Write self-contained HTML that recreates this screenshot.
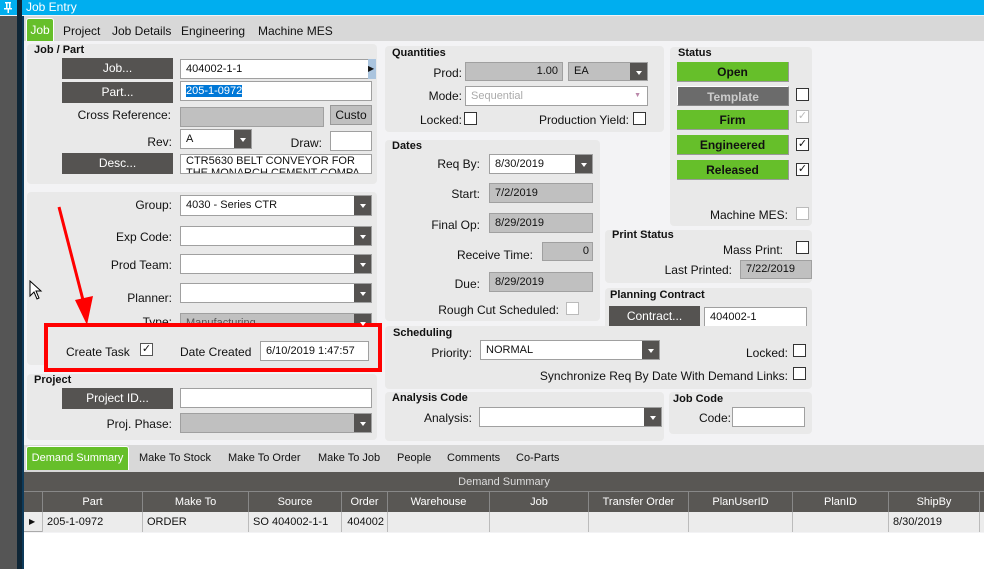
<!DOCTYPE html><html><head><style>
*{box-sizing:border-box;margin:0;padding:0}
body{width:984px;height:569px;overflow:hidden;background:#f3f3f5;font-family:"Liberation Sans",sans-serif;font-size:12px;color:#111;position:relative}
.a{position:absolute}
.pn{position:absolute;background:#e9e9e9;border-radius:4px}
.h{position:absolute;font-weight:bold;font-size:11px}
.l{position:absolute;text-align:right;font-size:12px;white-space:nowrap}
.b{position:absolute;background:#555351;color:#fff;text-align:center;font-size:12px;line-height:21px}
.i{position:absolute;background:#fff;border:1px solid #a0a0a0;font-size:11px;padding-left:5px;line-height:18px;white-space:nowrap;overflow:hidden}
.g{background:#c0c0c0}
.dd::after{content:"";position:absolute;right:0;top:0;bottom:0;width:17px;background:#555351}
.dd::before{content:"";position:absolute;right:5px;top:8px;border:3.5px solid transparent;border-top:4px solid #fff;z-index:2}
.cb{position:absolute;width:13px;height:13px;border:1px solid #333;background:#fff;font-size:11px;line-height:10px;text-align:center}
.st{position:absolute;left:677px;width:112px;height:20px;background:#66bf2a;font-weight:bold;text-align:center;line-height:20px;font-size:12px;border-right:1px solid #999;border-bottom:1px solid #999}
.n{font-family:"Liberation Sans Narrow","Liberation Sans",sans-serif;font-size:11px}
.col{position:absolute;top:492px;height:20px;line-height:20px;text-align:center;color:#fff;border-left:1px solid #888;background:#595754}
.cell{position:absolute;top:512px;height:20px;line-height:20px;border-left:1px solid #bbb;padding-left:4px;background:#ececec}
</style></head><body>
<div class="a" style="left:0;top:0;width:984px;height:15px;background:#00aeef"></div>
<div class="a" style="left:26px;top:0;color:#fff;font-size:12px;line-height:14px">Job Entry</div>
<div class="a" style="left:0;top:16px;width:17px;height:553px;background:#555"></div>
<div class="a" style="left:17px;top:0;width:5px;height:569px;background:#0f2636"></div>
<div class="a" style="left:22px;top:16px;width:2px;height:553px;background:#0d3a5a"></div>
<svg class="a" style="left:3px;top:2px" width="11" height="11"><rect x="2" y="0" width="6" height="1.5" fill="#fff"/><rect x="3" y="1" width="1.5" height="5" fill="#fff"/><rect x="6" y="1" width="1.5" height="5" fill="#fff"/><rect x="1" y="6" width="8" height="1.5" fill="#fff"/><rect x="4.5" y="7" width="1.5" height="4" fill="#fff"/></svg>
<div class="a" style="left:24px;top:16px;width:960px;height:25px;background:#d8d8d8"></div>
<div class="a" style="left:26px;top:18px;width:28px;height:23px;background:#66bf2a;border:1px solid #fff;border-bottom:none;border-radius:3px 3px 0 0;color:#fff;text-align:center;line-height:22px">Job</div>
<div class="a" style="left:63px;top:24px">Project</div>
<div class="a" style="left:112px;top:24px">Job Details</div>
<div class="a" style="left:181px;top:24px">Engineering</div>
<div class="a" style="left:258px;top:24px">Machine MES</div>

<div class="pn" style="left:27px;top:44px;width:350px;height:140px"></div>
<div class="h" style="left:34px;top:44px">Job / Part</div>
<div class="b" style="left:62px;top:58px;width:111px">Job...</div>
<div class="b" style="left:62px;top:82px;width:111px">Part...</div>
<div class="b" style="left:62px;top:153px;width:111px">Desc...</div>
<div class="i" style="left:180px;top:59px;width:189px;height:20px">404002-1-1</div>
<div class="a" style="left:368px;top:59px;width:8px;height:20px;background:#aac4de;font-size:8px;line-height:20px">▶</div>
<div class="i" style="left:180px;top:81px;width:192px;height:20px"><span style="background:#0078d7;color:#fff">205-1-0972</span></div>
<div class="l" style="left:70px;top:108px;width:101px">Cross Reference:</div>
<div class="i g" style="left:180px;top:107px;width:144px;height:20px"></div>
<div class="a" style="left:330px;top:105px;width:42px;height:20px;background:#c0c0c0;border:1px solid #999;text-align:center;line-height:18px">Custo</div>
<div class="l" style="left:100px;top:135px;width:72px">Rev:</div>
<div class="i dd" style="left:180px;top:129px;width:72px;height:20px">A</div>
<div class="l" style="left:280px;top:136px;width:42px">Draw:</div>
<div class="i" style="left:330px;top:131px;width:42px;height:20px"></div>
<div class="i" style="left:180px;top:154px;width:192px;height:20px;line-height:12px;font-size:11px">CTR5630 BELT CONVEYOR FOR<br>THE MONARCH CEMENT COMPA</div>

<div class="pn" style="left:27px;top:192px;width:350px;height:173px"></div>
<div class="l" style="left:80px;top:198px;width:92px">Group:</div>
<div class="i dd" style="left:180px;top:195px;width:192px;height:21px;line-height:19px">4030 - Series CTR</div>
<div class="l" style="left:80px;top:230px;width:92px">Exp Code:</div>
<div class="i dd" style="left:180px;top:226px;width:192px;height:20px"></div>
<div class="l" style="left:80px;top:258px;width:92px">Prod Team:</div>
<div class="i dd" style="left:180px;top:254px;width:192px;height:20px"></div>
<div class="l" style="left:80px;top:291px;width:92px">Planner:</div>
<div class="i dd" style="left:180px;top:283px;width:192px;height:20px"></div>
<div class="l" style="left:80px;top:315px;width:92px">Type:</div>
<div class="i g dd" style="left:180px;top:313px;width:192px;height:20px;color:#555">Manufacturing</div>
<div class="a" style="left:44px;top:323px;width:338px;height:49px;border:4px solid #f00;background:#e9e9e9"></div>
<div class="a" style="left:66px;top:345px">Create Task</div>
<div class="cb" style="left:140px;top:343px;border-color:#555">✓</div>
<div class="a" style="left:180px;top:345px">Date Created</div>
<div class="i" style="left:260px;top:341px;width:109px;height:20px;font-size:11px">6/10/2019 1:47:57</div>
<svg class="a" style="left:50px;top:200px" width="50" height="130"><line x1="9" y1="7" x2="33" y2="100" stroke="#f00" stroke-width="3"/><polygon points="25,100 43,96 37,125" fill="#f00"/></svg>
<svg class="a" style="left:29px;top:280px" width="14" height="22"><path d="M1 1 L1 16 L5 12 L8 19 L10 18 L7 11 L12 11 Z" fill="#fff" stroke="#000" stroke-width="1"/></svg>

<div class="pn" style="left:27px;top:374px;width:350px;height:66px"></div>
<div class="h" style="left:34px;top:374px">Project</div>
<div class="b" style="left:62px;top:388px;width:111px">Project ID...</div>
<div class="i" style="left:180px;top:388px;width:192px;height:20px"></div>
<div class="l" style="left:80px;top:417px;width:92px">Proj. Phase:</div>
<div class="i g dd" style="left:180px;top:413px;width:192px;height:20px"></div>

<div class="pn" style="left:385px;top:46px;width:279px;height:86px"></div>
<div class="h" style="left:392px;top:47px">Quantities</div>
<div class="l" style="left:400px;top:66px;width:62px">Prod:</div>
<div class="i g" style="left:465px;top:62px;width:98px;height:19px;text-align:right;padding-right:4px;line-height:17px">1.00</div>
<div class="i g dd" style="left:568px;top:62px;width:80px;height:19px;line-height:17px">EA</div>
<div class="l" style="left:400px;top:89px;width:62px">Mode:</div>
<div class="i" style="left:465px;top:86px;width:183px;height:20px;color:#aaa">Sequential<span style="position:absolute;right:6px;font-size:7px;color:#b8a">▼</span></div>
<div class="l" style="left:400px;top:113px;width:62px">Locked:</div>
<div class="cb" style="left:464px;top:112px"></div>
<div class="l" style="left:520px;top:113px;width:109px">Production Yield:</div>
<div class="cb" style="left:633px;top:112px"></div>

<div class="pn" style="left:385px;top:140px;width:215px;height:181px"></div>
<div class="h" style="left:392px;top:140px">Dates</div>
<div class="l" style="left:400px;top:157px;width:80px">Req By:</div>
<div class="i dd" style="left:489px;top:154px;width:104px;height:20px">8/30/2019</div>
<div class="l" style="left:400px;top:187px;width:80px">Start:</div>
<div class="i g" style="left:489px;top:183px;width:104px;height:20px">7/2/2019</div>
<div class="l" style="left:400px;top:218px;width:80px">Final Op:</div>
<div class="i g" style="left:489px;top:213px;width:104px;height:20px">8/29/2019</div>
<div class="l" style="left:400px;top:248px;width:133px">Receive Time:</div>
<div class="i g" style="left:542px;top:242px;width:51px;height:19px;text-align:right;padding-right:3px;line-height:17px">0</div>
<div class="l" style="left:400px;top:277px;width:80px">Due:</div>
<div class="i g" style="left:489px;top:272px;width:104px;height:20px">8/29/2019</div>
<div class="l" style="left:400px;top:303px;width:159px">Rough Cut Scheduled:</div>
<div class="cb" style="left:566px;top:302px;border-color:#bbb"></div>

<div class="pn" style="left:670px;top:47px;width:142px;height:179px"></div>
<div class="h" style="left:678px;top:47px">Status</div>
<div class="st" style="top:62px">Open</div>
<div class="st" style="top:86px;background:#6b6b6b;color:#ccc;border:1px solid #fff;border-right:1px solid #888;border-bottom:1px solid #888">Template</div>
<div class="st" style="top:110px">Firm</div>
<div class="st" style="top:135px">Engineered</div>
<div class="st" style="top:160px">Released</div>
<div class="cb" style="left:796px;top:88px"></div>
<div class="cb" style="left:796px;top:110px;border-color:#bbb;color:#bbb">✓</div>
<div class="cb" style="left:796px;top:138px">✓</div>
<div class="cb" style="left:796px;top:163px">✓</div>
<div class="l" style="left:690px;top:208px;width:98px">Machine MES:</div>
<div class="cb" style="left:796px;top:207px;border-color:#bbb"></div>

<div class="pn" style="left:605px;top:230px;width:207px;height:53px"></div>
<div class="h" style="left:612px;top:229px">Print Status</div>
<div class="l" style="left:690px;top:243px;width:93px">Mass Print:</div>
<div class="cb" style="left:796px;top:241px"></div>
<div class="l" style="left:640px;top:263px;width:92px">Last Printed:</div>
<div class="i g" style="left:740px;top:260px;width:72px;height:19px;line-height:17px">7/22/2019</div>

<div class="pn" style="left:605px;top:288px;width:207px;height:46px"></div>
<div class="h" style="left:610px;top:289px">Planning Contract</div>
<div class="b" style="left:609px;top:306px;width:91px">Contract...</div>
<div class="i" style="left:704px;top:307px;width:103px;height:21px;line-height:19px">404002-1</div>

<div class="pn" style="left:385px;top:326px;width:427px;height:63px"></div>
<div class="h" style="left:393px;top:327px">Scheduling</div>
<div class="l" style="left:400px;top:346px;width:72px">Priority:</div>
<div class="i dd" style="left:480px;top:340px;width:180px;height:20px">NORMAL</div>
<div class="l" style="left:700px;top:346px;width:88px">Locked:</div>
<div class="cb" style="left:793px;top:344px"></div>
<div class="l" style="left:520px;top:369px;width:268px">Synchronize Req By Date With Demand Links:</div>
<div class="cb" style="left:793px;top:367px"></div>

<div class="pn" style="left:385px;top:392px;width:279px;height:49px"></div>
<div class="h" style="left:392px;top:392px">Analysis Code</div>
<div class="l" style="left:400px;top:411px;width:72px">Analysis:</div>
<div class="i dd" style="left:479px;top:407px;width:183px;height:20px"></div>
<div class="pn" style="left:669px;top:392px;width:143px;height:42px"></div>
<div class="h" style="left:673px;top:393px">Job Code</div>
<div class="l" style="left:680px;top:411px;width:51px">Code:</div>
<div class="i" style="left:732px;top:407px;width:73px;height:20px"></div>

<div class="a" style="left:24px;top:445px;width:960px;height:27px;background:#d8d8d8"></div>
<div class="a n" style="left:26px;top:446px;width:103px;height:24px;background:#66bf2a;border:1px solid #fff;border-bottom:none;border-radius:3px 3px 0 0;color:#fff;text-align:center;line-height:22px">Demand Summary</div>
<div class="a n" style="left:139px;top:452px">Make To Stock</div>
<div class="a n" style="left:228px;top:452px">Make To Order</div>
<div class="a n" style="left:318px;top:452px">Make To Job</div>
<div class="a n" style="left:397px;top:452px">People</div>
<div class="a n" style="left:447px;top:452px">Comments</div>
<div class="a n" style="left:516px;top:452px">Co-Parts</div>
<div class="a n" style="left:24px;top:472px;width:960px;height:20px;background:#595754;color:#ddd;text-align:center;line-height:20px;border-bottom:1px solid #888">Demand Summary</div>
<div class="a" style="left:24px;top:492px;width:960px;height:20px;background:#595754"></div>
<div class="col n" style="left:42px;width:100px">Part</div>
<div class="col n" style="left:142px;width:106px">Make To</div>
<div class="col n" style="left:248px;width:93px">Source</div>
<div class="col n" style="left:341px;width:46px">Order</div>
<div class="col n" style="left:387px;width:102px">Warehouse</div>
<div class="col n" style="left:489px;width:99px">Job</div>
<div class="col n" style="left:588px;width:100px">Transfer Order</div>
<div class="col n" style="left:688px;width:104px">PlanUserID</div>
<div class="col n" style="left:792px;width:96px">PlanID</div>
<div class="col n" style="left:888px;width:91px">ShipBy</div>
<div class="col n" style="left:979px;width:10px"></div>
<div class="a" style="left:24px;top:512px;width:960px;height:20px;background:#ececec;border-bottom:1px solid #aaa"></div>
<div class="a" style="left:29px;top:512px;font-size:8px;line-height:20px">▶</div>
<div class="cell n" style="left:42px;width:100px">205-1-0972</div>
<div class="cell n" style="left:142px;width:106px">ORDER</div>
<div class="cell n" style="left:248px;width:93px">SO 404002-1-1</div>
<div class="cell n" style="left:341px;width:46px;text-align:right;padding-right:3px">404002</div>
<div class="cell n" style="left:387px;width:102px"></div>
<div class="cell n" style="left:489px;width:99px"></div>
<div class="cell n" style="left:588px;width:100px"></div>
<div class="cell n" style="left:688px;width:104px"></div>
<div class="cell n" style="left:792px;width:96px"></div>
<div class="cell n" style="left:888px;width:91px">8/30/2019</div>
<div class="cell n" style="left:979px;width:10px"></div>
<div class="a" style="left:24px;top:533px;width:960px;height:36px;background:#fff"></div>
</body></html>
